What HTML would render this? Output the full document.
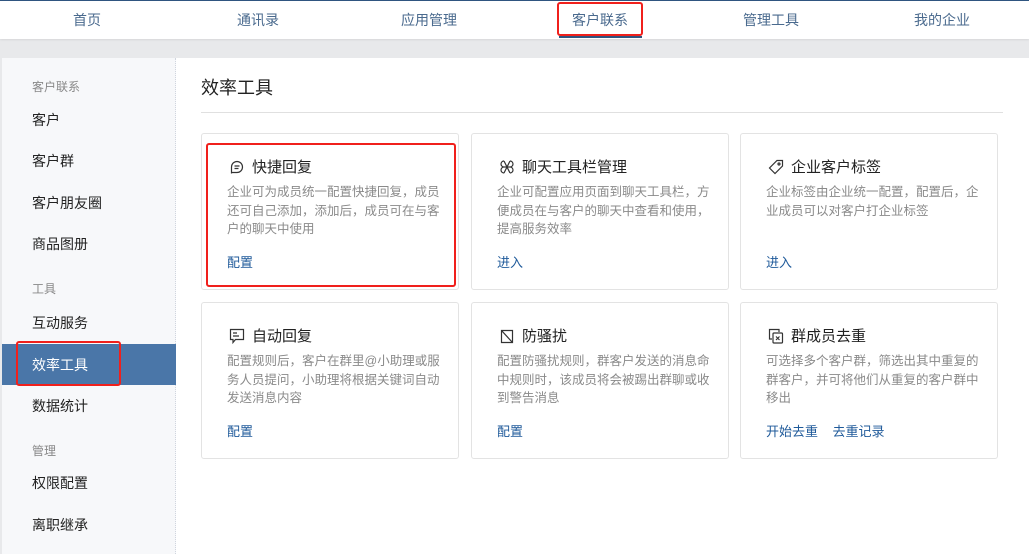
<!DOCTYPE html>
<html><head><meta charset="utf-8"><style>
*{margin:0;padding:0;box-sizing:border-box}
body{width:1029px;height:554px;overflow:hidden;background:#e8e9eb;font-family:"Liberation Sans","Noto Sans CJK SC",sans-serif;position:relative}
.top{position:absolute;left:0;top:0;width:1029px;height:39px;background:#fff;border-top:1px solid #2f5580;box-shadow:0 1px 2px rgba(0,0,0,.08)}
.nav{position:absolute;top:10px;font-size:14px;color:#4a6a8e;transform:translateX(-50%);white-space:nowrap}
.ul{position:absolute;left:559px;top:36px;width:83px;height:2px;background:#2f5580}
.red{position:absolute;border:2px solid #f0201c;border-radius:3px}
.panel{position:absolute;left:2px;top:58px;width:1027px;height:496px;background:#fff}
.side{position:absolute;left:2px;top:58px;width:174px;height:496px;background:#f7f8fa;border-right:1px dotted #d0d5de}
.s{position:absolute;left:32px;font-size:14px;color:#222}
.g{position:absolute;left:32px;font-size:12px;color:#888}
.act{position:absolute;left:2px;top:344px;width:174px;height:41px;background:#4a76a8}
h1{position:absolute;left:201px;top:74px;font-size:18px;font-weight:normal;color:#222}
.hr{position:absolute;left:201px;top:112px;width:802px;height:1px;background:#e0e0e0}
.card{position:absolute;width:258px;height:157px;border:1px solid #e3e3e3;border-radius:3px;background:#fff}
.ct{position:absolute;left:27px;top:22px;font-size:15px;color:#222;display:flex;align-items:center;gap:7px;white-space:nowrap}
.cd{position:absolute;left:25px;top:49px;width:215px;font-size:12.5px;line-height:18.5px;color:#8a8a8a}
.ck{position:absolute;left:25px;top:118px;font-size:13px;color:#1f5a9a;white-space:nowrap}
svg{display:block}
</style></head><body>
<div class="top"></div>
<div class="nav" style="left:87px">首页</div>
<div class="nav" style="left:258px">通讯录</div>
<div class="nav" style="left:429px">应用管理</div>
<div class="nav" style="left:600px">客户联系</div>
<div class="nav" style="left:771px">管理工具</div>
<div class="nav" style="left:942px">我的企业</div>
<div class="ul"></div>
<div class="red" style="left:557px;top:2px;width:86px;height:34px"></div>
<div class="panel"></div>
<div class="side"></div>
<div class="g" style="top:78px">客户联系</div>
<div class="s" style="top:110px">客户</div>
<div class="s" style="top:151px">客户群</div>
<div class="s" style="top:193px">客户朋友圈</div>
<div class="s" style="top:234px">商品图册</div>
<div class="g" style="top:280px">工具</div>
<div class="s" style="top:313px">互动服务</div>
<div class="act"></div>
<div class="s" style="top:355px;color:#fff">效率工具</div>
<div class="s" style="top:396px">数据统计</div>
<div class="g" style="top:442px">管理</div>
<div class="s" style="top:473px">权限配置</div>
<div class="s" style="top:515px">离职继承</div>
<div class="red" style="left:16px;top:341px;width:105px;height:45px"></div>
<h1>效率工具</h1>
<div class="hr"></div>

<div class="card" style="left:201px;top:133px">
<div class="ct"><svg width="16" height="16" viewBox="0 0 16 16" fill="none" stroke="#333" stroke-width="1.2"><path d="M2.5 14.5V8a5.5 5.5 0 1 1 5.5 5.5H2.5z"/><path d="M5.5 7h5M5.5 9.5h4"/></svg>快捷回复</div>
<div class="cd">企业可为成员统一配置快捷回复，成员还可自己添加，添加后，成员可在与客户的聊天中使用</div>
<div class="ck">配置</div></div>
<div class="card" style="left:471px;top:133px">
<div class="ct"><svg width="16" height="16" viewBox="0 0 16 16" fill="none" stroke="#333" stroke-width="1.2"><path d="M5 2a3 3 0 1 0 0 6h6a3 3 0 1 0 0-6M5 14a3 3 0 1 1 0-6M11 14a3 3 0 1 0 0-6M5 2q3 6 6 12M11 2q-3 6-6 12"/></svg>聊天工具栏管理</div>
<div class="cd">企业可配置应用页面到聊天工具栏，方便成员在与客户的聊天中查看和使用，提高服务效率</div>
<div class="ck">进入</div></div>
<div class="card" style="left:740px;top:133px">
<div class="ct"><svg width="16" height="16" viewBox="0 0 16 16" fill="none" stroke="#333" stroke-width="1.2"><path d="M9 1.5h5.5V7L7 14.5 1.5 9z"/><circle cx="11" cy="5" r="1"/></svg>企业客户标签</div>
<div class="cd">企业标签由企业统一配置，配置后，企业成员可以对客户打企业标签</div>
<div class="ck">进入</div></div>

<div class="card" style="left:201px;top:302px">
<div class="ct"><svg width="16" height="16" viewBox="0 0 16 16" fill="none" stroke="#333" stroke-width="1.2"><path d="M1.5 1.5h13v10h-8l-2.5 3v-3H1.5z"/><path d="M4 5h4M4 8h6"/></svg>自动回复</div>
<div class="cd">配置规则后，客户在群里@小助理或服务人员提问，小助理将根据关键词自动发送消息内容</div>
<div class="ck">配置</div></div>
<div class="card" style="left:471px;top:302px">
<div class="ct"><svg width="16" height="16" viewBox="0 0 16 16" fill="none" stroke="#333" stroke-width="1.2"><path d="M2.5 14.5V2.5h11v12zM2.5 2.5l11 12"/></svg>防骚扰</div>
<div class="cd">配置防骚扰规则，群客户发送的消息命中规则时，该成员将会被踢出群聊或收到警告消息</div>
<div class="ck">配置</div></div>
<div class="card" style="left:740px;top:302px">
<div class="ct"><svg width="16" height="16" viewBox="0 0 16 16" fill="none" stroke="#333" stroke-width="1.2"><path d="M4 11H1.5V1.5H11V4"/><rect x="5" y="5" width="9.5" height="10" rx="1"/><path d="M8 8.5l3.5 3.5M11.5 8.5L8 12"/></svg>群成员去重</div>
<div class="cd">可选择多个客户群，筛选出其中重复的群客户，并可将他们从重复的客户群中移出</div>
<div class="ck">开始去重&nbsp;&nbsp;&nbsp;&nbsp;去重记录</div></div>

<div class="red" style="left:206px;top:143px;width:250px;height:144px"></div>
</body></html>
